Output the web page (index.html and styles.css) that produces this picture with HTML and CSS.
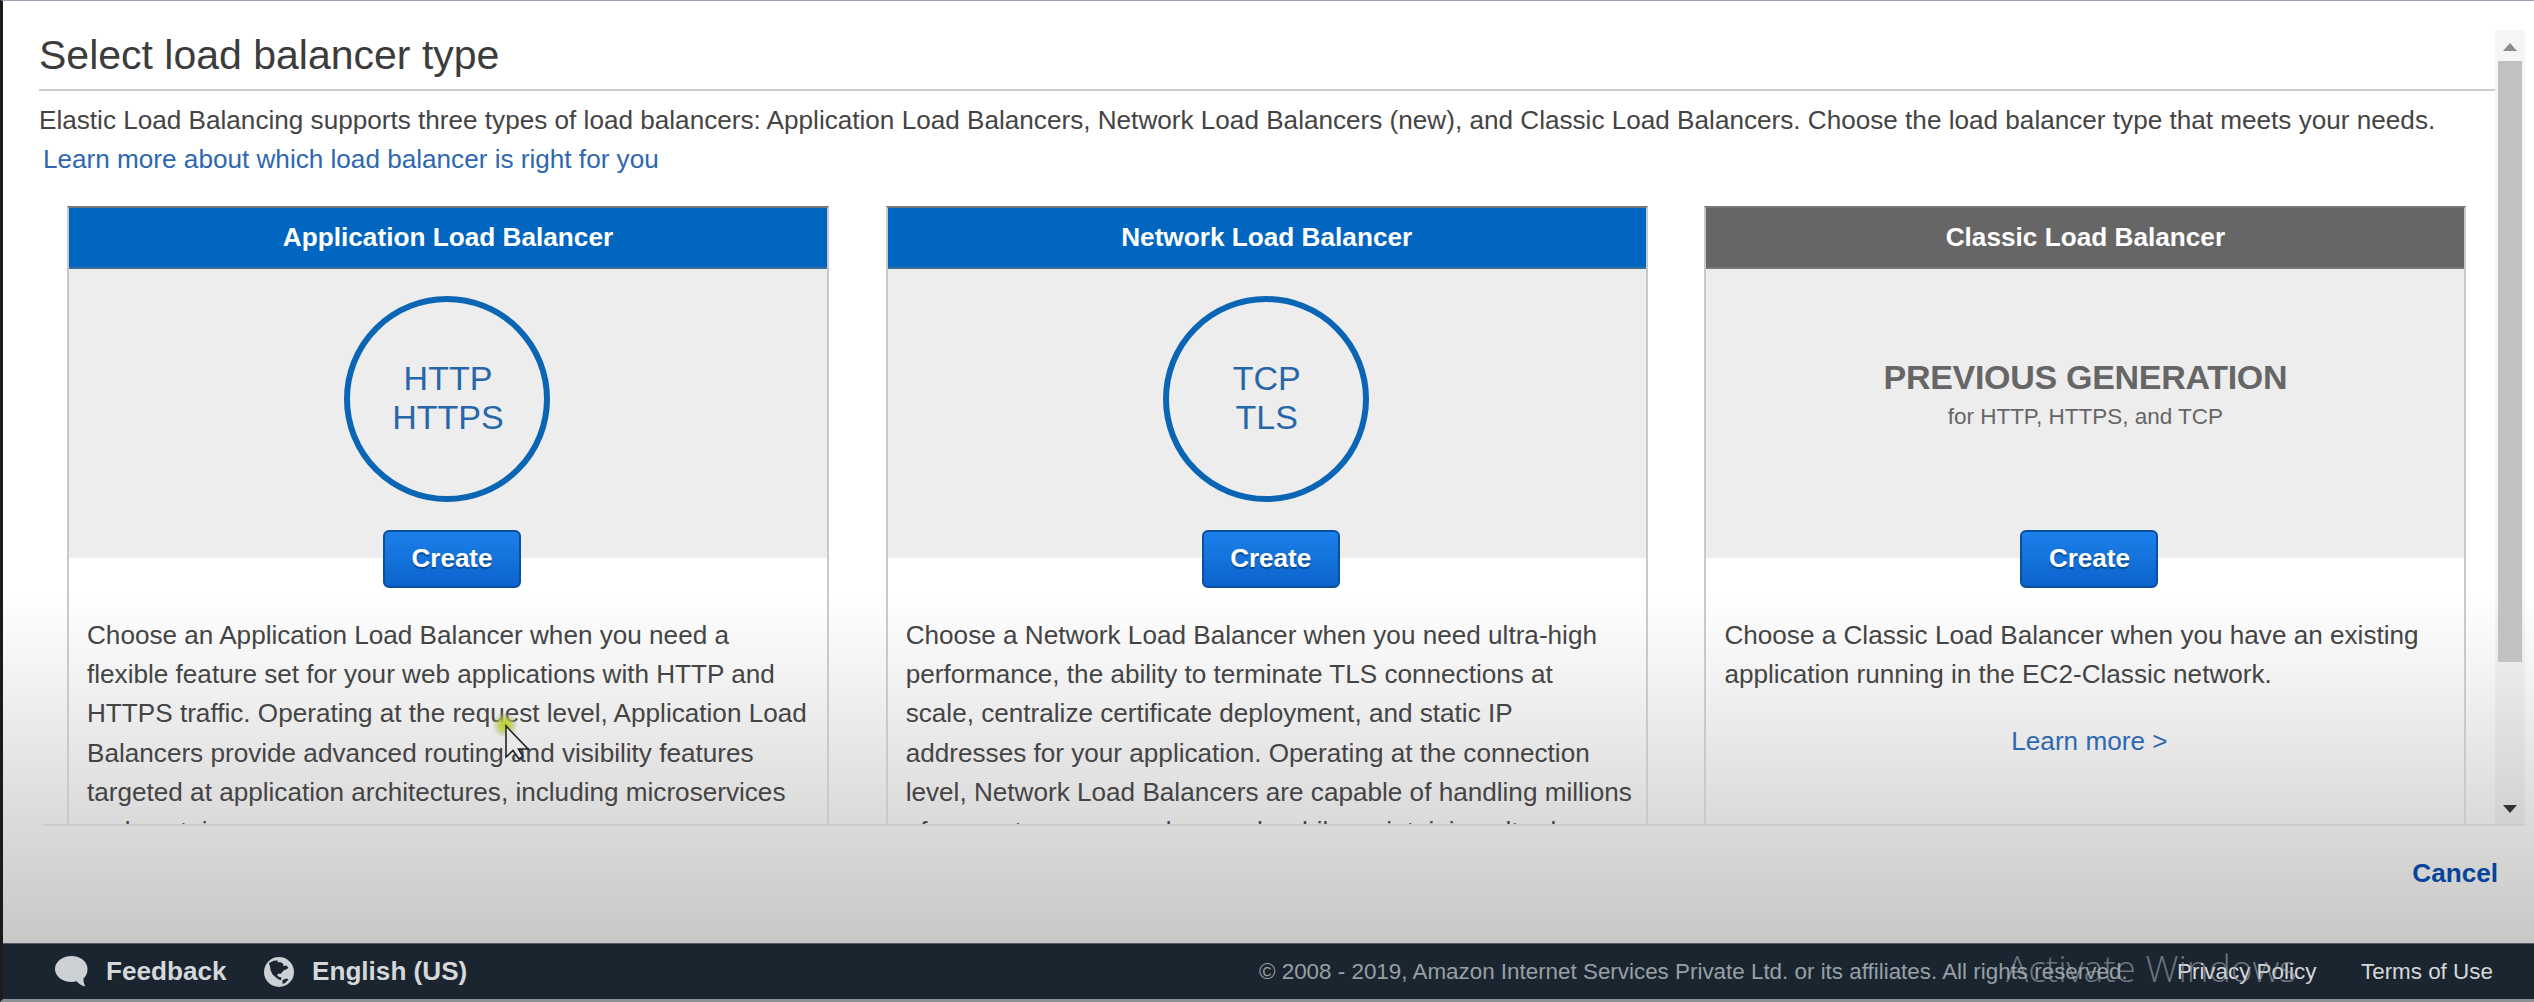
FILE: index.html
```html
<!DOCTYPE html>
<html lang="en">
<head>
<meta charset="utf-8">
<title>Select load balancer type</title>
<link rel="stylesheet" href="styles.css">
</head>
<body>
<div class="app">
  <main class="panel">
    <div class="content">
      <h1 class="title">Select load balancer type</h1>
      <p class="intro">Elastic Load Balancing supports three types of load balancers: Application Load Balancers, Network Load Balancers (new), and Classic Load Balancers. Choose the load balancer type that meets your needs.<br><a class="link learn-which">Learn more about which load balancer is right for you</a></p>
      <div class="cards">
        <section class="card">
          <h2 class="card-head">Application Load Balancer</h2>
          <div class="hero"><div class="ring">HTTP<br>HTTPS</div></div>
          <button class="create">Create</button>
          <p class="desc">Choose an Application Load Balancer when you need a<br>flexible feature set for your web applications with HTTP and<br>HTTPS traffic. Operating at the request level, Application Load<br>Balancers provide advanced routing and visibility features<br>targeted at application architectures, including microservices<br>and containers.</p>
        </section>
        <section class="card">
          <h2 class="card-head">Network Load Balancer</h2>
          <div class="hero"><div class="ring">TCP<br>TLS</div></div>
          <button class="create">Create</button>
          <p class="desc">Choose a Network Load Balancer when you need ultra-high<br>performance, the ability to terminate TLS connections at<br>scale, centralize certificate deployment, and static IP<br>addresses for your application. Operating at the connection<br>level, Network Load Balancers are capable of handling millions<br>of requests per second securely while maintaining ultra-low</p>
        </section>
        <section class="card">
          <h2 class="card-head classic">Classic Load Balancer</h2>
          <div class="hero previous"><strong class="prev-title">PREVIOUS GENERATION</strong><span class="prev-sub">for HTTP, HTTPS, and TCP</span></div>
          <button class="create">Create</button>
          <p class="desc">Choose a Classic Load Balancer when you have an existing<br>application running in the EC2-Classic network.</p>
          <a class="link more">Learn more &gt;</a>
        </section>
      </div>
    </div>
    <div class="scrollbar">
      <svg class="arrow" viewBox="0 0 14 10"><path d="M7 1L14 9H0z" fill="#8b8b8b"/></svg>
      <div class="thumb"></div>
      <svg class="arrow down" viewBox="0 0 14 10"><path d="M0 1H14L7 9z" fill="#333"/></svg>
    </div>
  </main>
  <div class="actions"><a class="cancel">Cancel</a></div>
  <footer class="footer">
    <svg class="bubble" viewBox="0 0 33 31"><path d="M16.500 0C7.400 0 0 5.800 0 13s7.400 13 16.500 13c1.900 0 3.500-.2 5.200-.7 1.900 2.400 4.800 4.800 8.800 5.200-1.500-2.200-2.200-5-2-8 2.800-2.500 4-5.800 4-9.500C32.500 5.800 25.600 0 16.500 0z" fill="#ccd1d6"/></svg>
    <span class="foot-strong feedback">Feedback</span>
    <svg class="globe" viewBox="0 0 30 30"><circle cx="15" cy="15" r="15" fill="#ccd1d6"/><path d="M5 6L9.500 3.800 14 3.500 13.500 5.500 16 5 19 6.500 19.500 9 22.500 8.500 24.500 11 22 12.500 19.500 13.500 17.500 16 16 17 14.500 16.500 13 18 15 20 17.500 20.500 17 23 14.500 22.500 11.500 20 8.500 17.500 6.500 13 6 9.500z M18.500 23L22.500 21.500 24.500 22.500 21 26 18.500 27z" fill="#1b2530"/></svg>
    <span class="foot-strong lang">English (US)</span>
    <span class="copy">© 2008 - 2019, Amazon Internet Services Private Ltd. or its affiliates. All rights reserved.</span>
    <a class="foot-link privacy">Privacy Policy</a>
    <a class="foot-link terms">Terms of Use</a>
  </footer>
  <div class="watermark">Activate Windows</div>
  <svg class="cursor" viewBox="0 0 44 48"><defs><radialGradient id="glow"><stop offset="0" stop-color="#b5cc16"/><stop offset=".45" stop-color="#bccb3f" stop-opacity=".8"/><stop offset="1" stop-color="#a9ab90" stop-opacity="0"/></radialGradient></defs><circle cx="17" cy="13" r="13" fill="url(#glow)"/><path d="M18 14V45L25 38.500 31 47 35 44.500 30.500 37H40z" fill="#e9e9e9" stroke="#222" stroke-width="1.600"/></svg>
</div>
</body>
</html>
```
FILE: styles.css
```css
* { box-sizing: border-box; }
html, body { margin: 0; height: 100%; overflow: hidden; }
body { font-family: "Liberation Sans", Arial, sans-serif; font-size: 26.130px; color: #444; background: #a4a8ad; }
h1, h2, p { margin: 0; font-weight: normal; }
.app { position: relative; display: flex; flex-direction: column; width: 2534px; height: 1002px; border-left: 3px solid #1b1b1b; border-top: 1px solid #9ba1b0; border-bottom: 3px solid #8d9196; background: linear-gradient(#fff 590px, #f5f5f5 660px, #e8e8e8 740px, #d9d9d9 830px, #c8c8c6 942px); }
.panel { display: flex; height: 825px; padding-top: 29px; position: relative; }
.panel::after { content: ""; position: absolute; left: 40px; right: 10px; bottom: 0; height: 2px; background: #cbcbcb; }
.content { width: 2456px; margin-left: 36px; overflow: hidden; white-space: nowrap; }
.title { height: 61px; border-bottom: 2px solid #ccc; font-size: 41px; line-height: 50px; color: #3c3c3c; }
.intro { line-height: 39.200px; height: 115px; padding-top: 10px; }
.link { color: #2d67b2; }
.learn-which { margin-left: 4px; }
.cards { display: flex; gap: 56.700px; padding-left: 28px; }
.card { flex: none; width: 762px; height: 640px; border: 2px solid #c9c9c9; border-top-color: #777; display: flex; flex-direction: column; }
.card-head { flex: none; height: 61px; line-height: 59px; font-size: 26.200px; background: #0166bf; border-bottom: 2px solid #3f6c95; color: #fff; font-weight: bold; text-align: center; }
.card-head.classic { background: #666; border-color: #777; }
.hero { flex: none; height: 289px; background: #ededed; padding-top: 27px; }
.ring { width: 206px; height: 206px; margin-left: 275px; border: 6px solid #0a66b4; border-radius: 50%; padding: 57px 0 0 2px; text-align: center; font-size: 34px; line-height: 39px; color: #2766a8; }
.previous { display: flex; flex-direction: column; align-items: center; padding-top: 88px; color: #666; }
.prev-title { font-size: 34px; line-height: 40px; letter-spacing: -.3px; }
.prev-sub { font-size: 22.500px; line-height: 40px; }
.create { width: 138px; height: 58px; margin: -28px 0 0 314px; padding: 0 0 2px; flex: none; border: 2px solid #0b4f9f; border-radius: 6px; background: linear-gradient(#1c80ea, #0b64cc); color: #fff; font: bold 26px "Liberation Sans", Arial, sans-serif; text-shadow: 0 2px 1px #084a94; }
.desc { flex: none; margin: 28px 0 0 18px; line-height: 39.200px; }
.more { align-self: center; margin: 28px 0 0 8px; line-height: 39px; }
.scrollbar { width: 30px; padding: 12px 3px; background: rgba(0,0,0,.04); display: flex; flex-direction: column; align-items: center; }
.arrow { width: 14px; height: 10px; }
.thumb { width: 24px; height: 601px; margin-top: 9px; background: #c1c1c1; }
.down { margin-top: auto; }
.actions { height: 117px; padding: 29px 36px 0 0; text-align: right; }
.cancel { color: #06439a; font-weight: bold; line-height: 36px; }
.footer { flex: 1; display: flex; align-items: center; background: #1b2530; border-top: 1px solid #4f5a64; color: #d5d8da; white-space: nowrap; }
.bubble { width: 33px; height: 31px; margin-left: 52px; }
.feedback { margin-left: 18px; width: 122px; }
.globe { width: 30px; height: 30px; margin-left: 36px; }
.lang { margin-left: 18px; width: 158px; }
.foot-strong { font-weight: bold; }
.copy { margin-left: 789px; width: 868px; font-size: 22.400px; color: #96a0a5; }
.foot-link { font-size: 22.400px; width: 140px; margin-left: 50px; }
.foot-link.terms { margin-left: 44px; }
.watermark { position: absolute; left: 2003px; top: 943px; font: 300 37px/48px "Open Sans", sans-serif; color: rgba(165,172,180,.6); white-space: nowrap; }
.cursor { position: absolute; left: 485px; top: 711px; width: 44px; height: 48px; }
```
